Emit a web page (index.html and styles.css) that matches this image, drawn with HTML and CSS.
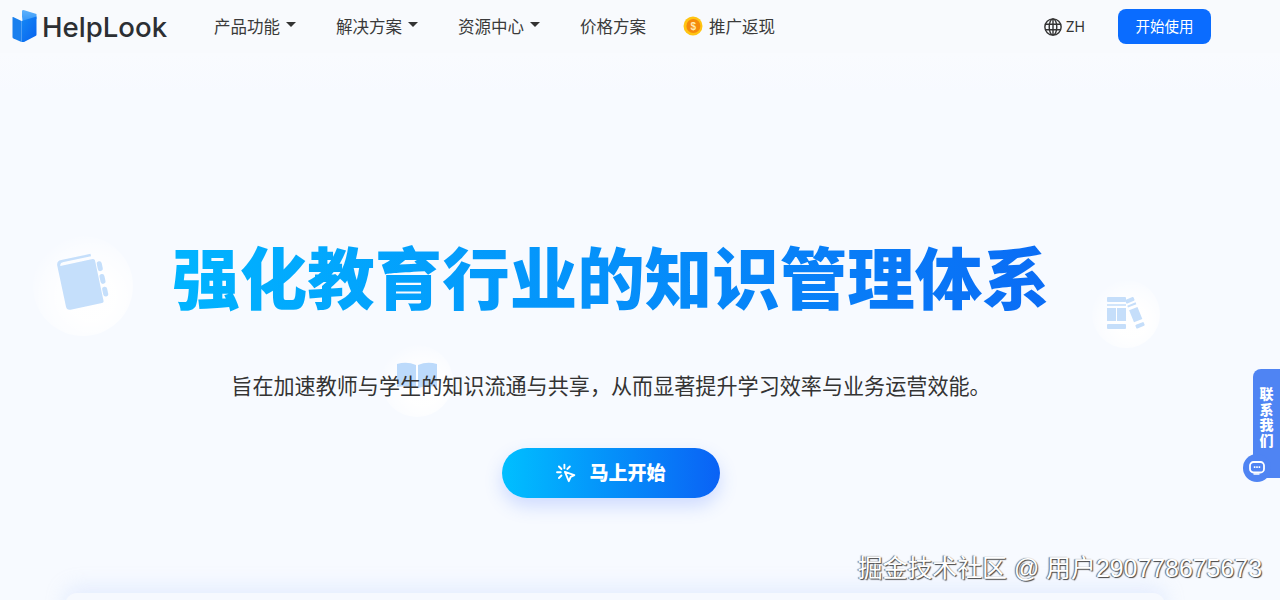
FILE: index.html
```html
<!DOCTYPE html>
<html lang="zh">
<head>
<meta charset="utf-8">
<title>HelpLook</title>
<link rel="stylesheet" href="styles.css">
</head>
<body>
<div class="page">
  <header class="header">
    <a class="logo">
      <svg class="logo-icon" width="26" height="34" viewBox="0 0 26 34">
        <defs>
          <linearGradient id="lg1" x1="0" y1="0" x2="0" y2="1"><stop offset="0" stop-color="#5fb2fb"/><stop offset="1" stop-color="#2b90f8"/></linearGradient>
          <linearGradient id="lg2" x1="0" y1="0" x2="1" y2="1"><stop offset="0" stop-color="#1488f6"/><stop offset="1" stop-color="#0862ee"/></linearGradient>
        </defs>
        <path d="M10 7.500V1.500L11.500 1 24.500 5v5L11 15z" fill="url(#lg1)"/>
        <path d="M0.500 8.500Q0.500 7.800 1.200 8L9.500 12V33L1.500 29.500Q0.500 29 .5 28z" fill="#1a80ee"/>
        <path d="M9.500 12 24.500 7.500V25.500Q24.500 26.500 23.500 27L12 33H9.500z" fill="url(#lg2)"/>
      </svg>
      <span class="logo-text">HelpLook</span>
    </a>
    <nav class="nav">
      <a class="nav-item">产品功能<i class="caret"></i></a>
      <a class="nav-item">解决方案<i class="caret"></i></a>
      <a class="nav-item">资源中心<i class="caret"></i></a>
      <a class="nav-item">价格方案</a>
      <a class="nav-item promo">
        <svg width="20" height="20" viewBox="0 0 20 20">
          <circle cx="10" cy="10" r="9.500" fill="#ffc412"/>
          <circle cx="10.400" cy="10" r="7" fill="#f58a0c"/>
          <text x="10.400" y="13.600" class="coin-mark">$</text>
        </svg>
        推广返现
      </a>
    </nav>
    <div class="actions">
      <a class="lang">
        <svg width="18" height="18" viewBox="0 0 19 19" fill="none" stroke="#333" stroke-width="1.500">
          <circle cx="9.500" cy="9.500" r="8.600"/>
          <ellipse cx="9.500" cy="9.500" rx="4" ry="8.600"/>
          <path d="M9.500 1v17M1.400 6.600h16.200M1.400 12.400h16.200"/>
        </svg>
        ZH
      </a>
      <a class="start-btn">开始使用</a>
    </div>
  </header>

  <main class="hero">
    <div class="orb orb-book">
      <svg width="60" height="62" viewBox="0 0 60 62">
        <g fill="#bcdafb" transform="rotate(-12 30 30)">
          <path d="M8 10q0-5 5-5h30v2.500H15q-4 0-4 3H44a2 2 0 0 1 2 2v41a2 2 0 0 1-2 2H12q-4 0-4-4z"/>
          <rect x="47" y="14" width="5" height="10" rx="2.500"/>
          <rect x="47" y="27" width="5" height="10" rx="2.500"/>
          <rect x="47" y="40" width="5" height="10" rx="2.500"/>
        </g>
      </svg>
    </div>
    <div class="orb orb-open">
      <svg width="42" height="26" viewBox="0 0 42 26">
        <path d="M1 2q10-3 19 1v23q-9-3-19-1zM22 3q9-4 19-1v23q-10-2-19 1z" fill="#bcdafb"/>
      </svg>
    </div>
    <div class="orb orb-shelf">
      <svg width="40" height="36" viewBox="0 0 40 36" fill="#c5defa">
        <rect x="1" y="1" width="19" height="5" rx="1"/>
        <rect x="1" y="8" width="19" height="2" opacity=".8"/>
        <rect x="1" y="12" width="9" height="13"/>
        <rect x="11" y="12" width="9" height="13"/>
        <rect x="1" y="28" width="19" height="5" rx="1"/>
        <g transform="rotate(-22 30 18)">
          <rect x="25" y="1" width="9" height="4" rx="1"/>
          <rect x="25" y="7" width="9" height="2"/>
          <rect x="25" y="12" width="9" height="13"/>
          <rect x="25" y="28" width="9" height="4" rx="1"/>
        </g>
      </svg>
    </div>

    <h1 class="title">强化教育行业的知识管理体系</h1>
    <p class="subtitle">旨在加速教师与学生的知识流通与共享，从而显著提升学习效率与业务运营效能。</p>
    <a class="cta">
      <svg width="21" height="21" viewBox="0 0 20 20" fill="none" stroke="#fff" stroke-width="1.800" stroke-linecap="round" stroke-linejoin="round">
        <path d="M8 1.500v3.500M2.800 3.300l2.400 2.400M13.200 3.300l-2.400 2.400M1 8.800h3.500M2.800 14.300l2.400-2.400"/>
        <path d="M8.500 8.500l9 3-3.500 1.800-1.800 4z"/>
      </svg>
      <span class="cta-label">马上开始</span>
    </a>
    <div class="preview"></div>
  </main>

  <aside class="contact">
    <span class="contact-text">联系我们</span>
    <span class="contact-bubble">
      <svg width="16" height="14" viewBox="0 0 16 14" fill="none">
        <rect x="1" y="1" width="14" height="10.500" rx="3.500" stroke="#fff" stroke-width="1.800"/>
        <path d="M5 13h5" stroke="#fff" stroke-width="1.400" stroke-linecap="round"/>
        <path d="M4.800 6.200h6.400" stroke="#fff" stroke-width="1.800" stroke-dasharray="1.600 .8"/>
      </svg>
    </span>
  </aside>

  <div class="watermark">掘金技术社区 @ 用户290778675673</div>
</div>
</body>
</html>
```

FILE: styles.css
```css
* { box-sizing: border-box; }
html, body { margin: 0; height: 100%; overflow: hidden; }
body {
  font-family: "Noto Sans CJK SC", "Noto Sans", sans-serif;
  color: #333;
  background: #f7faff;
}
a { text-decoration: none; color: inherit; }

.page {
  position: relative;
  width: 1280px;
  height: 600px;
  overflow: hidden;
  background: #f7faff;
}

.header {
  display: flex;
  align-items: center;
  height: 53px;
  padding: 0 69px 0 12px;
  background: #f8fafd;
}
.logo { display: flex; align-items: center; gap: 4px; width: 202px; }
.logo-icon { flex: none; margin-top: -2px; }
.logo-text {
  font-family: Inter, Roboto, sans-serif;
  font-size: 27.600px;
  font-weight: 500;
  color: #2c2f33;
}
.nav { display: flex; align-items: center; gap: 40px; font-size: 16.500px; padding-bottom: 1px; }
.nav-item { display: flex; align-items: center; gap: 6px; color: #3a3a3a; line-height: 24px; }
.caret {
  width: 0;
  height: 0;
  margin-top: -3px;
  border: 5px solid transparent;
  border-top: 5px solid #333;
  border-bottom: 0;
}
.promo { margin-left: -3px; }
.coin-mark { font-family: "Liberation Sans", sans-serif; font-size: 10px; font-weight: 700; fill: #ffe9b0; text-anchor: middle; }

.actions { display: flex; align-items: center; gap: 33px; margin-left: auto; }
.lang { display: flex; align-items: center; gap: 4px; font-size: 14px; color: #333; font-family: Inter, sans-serif; }
.start-btn {
  width: 93px;
  height: 35px;
  line-height: 33px;
  text-align: center;
  font-size: 14.500px;
  color: #fff;
  background: #0a6cff;
  border-radius: 8px;
}

.hero {
  display: flex;
  flex-direction: column;
  align-items: center;
  height: 547px;
  padding: 178px 58px 0 0;
  background: linear-gradient(#f9fbfe, #f7faff 40px);
}
.title {
  flex: none;
  margin: 0;
  font-size: 67.500px;
  line-height: 88px;
  font-weight: 900;
  white-space: nowrap;
  color: transparent;
  background: linear-gradient(90deg, #00b4ff, #0a6cf5);
  -webkit-background-clip: text;
  background-clip: text;
}
.subtitle {
  flex: none;
  margin: 50px 0 0;
  font-size: 21.100px;
  line-height: 32px;
  color: #333;
  position: relative;
  z-index: 1;
  white-space: nowrap;
}
.cta {
  flex: none;
  display: flex;
  align-items: center;
  justify-content: center;
  gap: 12px;
  width: 218px;
  height: 50px;
  margin-top: 47px;
  border-radius: 25px;
  font-size: 19px;
  font-weight: 900;
  color: #fff;
  background: linear-gradient(90deg, #00bfff, #0a62f5);
  box-shadow: 0 8px 18px rgba(60, 110, 255, .22);
}
.cta-label { padding-bottom: 3px; }
.preview {
  flex: none;
  width: 1100px;
  height: 40px;
  margin: 95px 0 0 8px;
  border-radius: 12px;
  background: #f6f9fe;
  box-shadow: 0 -6px 20px rgba(170, 200, 250, .25);
}

.orb {
  position: absolute;
  display: flex;
  align-items: center;
  justify-content: center;
  border-radius: 50%;
  background: radial-gradient(circle at 58% 60%, rgba(255, 255, 255, .95) 30%, rgba(255, 255, 255, .45) 58%, rgba(247, 250, 255, 0) 76%);
}
.orb-book { left: 33px; top: 236px; width: 100px; height: 100px; padding-bottom: 8px; }
.orb-book svg { opacity: .85; }
.orb-open { left: 381px; top: 345px; width: 72px; height: 72px; padding-bottom: 12px; }
.orb-shelf { left: 1092px; top: 280px; width: 68px; height: 68px; }

.contact {
  position: absolute;
  right: 0;
  top: 369px;
  width: 27px;
  height: 109px;
  border-radius: 8px 0 0 8px;
  background: #4f84f3;
  display: flex;
  justify-content: center;
  padding-top: 17px;
}
.contact-text {
  width: 14px;
  font-size: 14px;
  line-height: 15.500px;
  font-weight: 900;
  color: #fff;
  text-align: center;
}
.contact-bubble {
  position: absolute;
  left: -10px;
  bottom: -4px;
  width: 28px;
  height: 28px;
  border-radius: 50%;
  background: #4f84f3;
  display: flex;
  align-items: center;
  justify-content: center;
}

.watermark {
  position: absolute;
  right: 18px;
  bottom: 16px;
  font-family: "Liberation Sans", "Noto Sans CJK SC", sans-serif;
  font-size: 24.900px;
  line-height: 32px;
  color: #fff;
  text-shadow: 1px 1px 1px #444, -1px 0 1px #666;
  white-space: nowrap;
}
```
